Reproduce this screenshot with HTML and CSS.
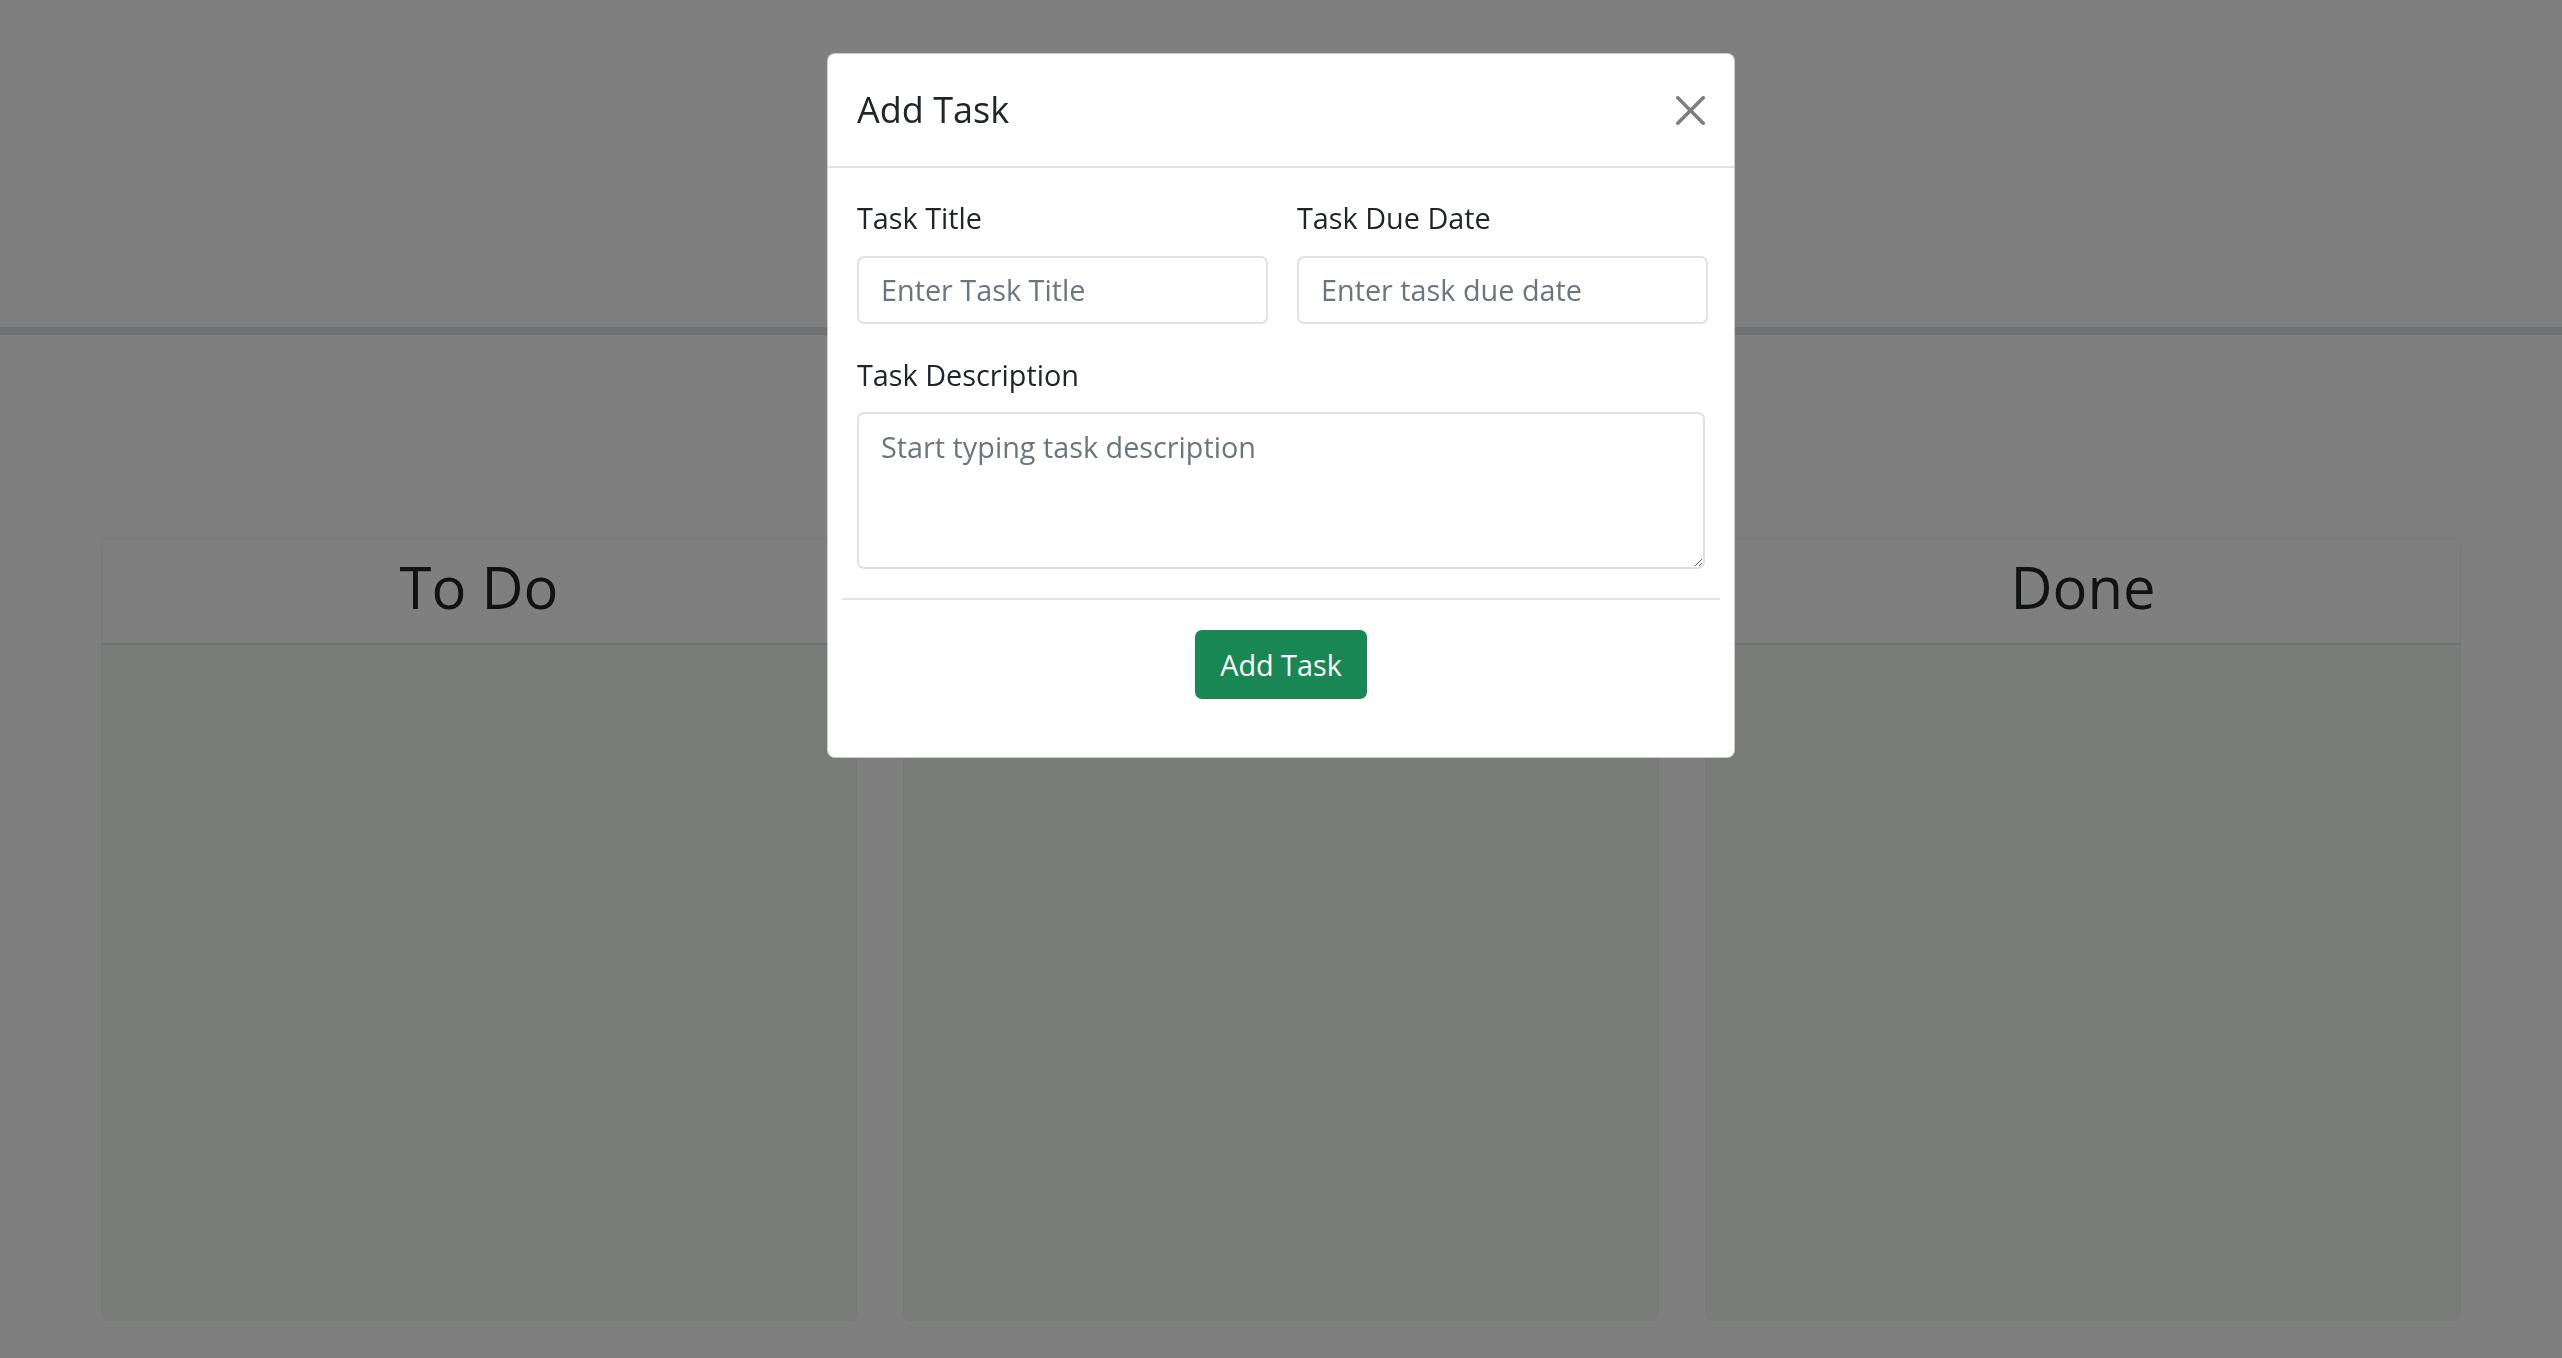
FILE: index.html
```html
<!DOCTYPE html>
<html lang="en">
<head>
<meta charset="utf-8">
<title>Task Board</title>
<link rel="stylesheet" href="styles.css">
</head>
<body>
<header class="page-header"></header>
<main class="board">
  <section class="lane">
    <div class="lane-head"><h2 class="lane-title">To Do</h2></div>
    <div class="lane-body"></div>
  </section>
  <section class="lane">
    <div class="lane-head"><h2 class="lane-title"></h2></div>
    <div class="lane-body"></div>
  </section>
  <section class="lane">
    <div class="lane-head"><h2 class="lane-title">Done</h2></div>
    <div class="lane-body"></div>
  </section>
</main>

<div class="backdrop"></div>
<div class="modal">
  <div class="modal-dialog">
    <div class="modal-header">
      <h5 class="modal-title">Add Task</h5>
      <button class="btn-close" type="button" aria-label="Close">
        <svg viewBox="0 0 16 16" width="29" height="29"><path d="M.293.293a1 1 0 0 1 1.414 0L8 6.586 14.293.293a1 1 0 1 1 1.414 1.414L9.414 8l6.293 6.293a1 1 0 0 1-1.414 1.414L8 9.414l-6.293 6.293a1 1 0 0 1-1.414-1.414L6.586 8 .293 1.707a1 1 0 0 1 0-1.414z"/></svg>
      </button>
    </div>
    <div class="modal-body">
      <div class="field-row">
        <div class="field">
          <label class="field-label" for="title">Task Title</label>
          <input class="field-input" id="title" type="text" placeholder="Enter Task Title">
        </div>
        <div class="field">
          <label class="field-label" for="due">Task Due Date</label>
          <input class="field-input" id="due" type="text" placeholder="Enter task due date">
        </div>
      </div>
      <div class="field">
        <label class="field-label" for="desc">Task Description</label>
        <textarea class="field-input field-area" id="desc" placeholder="Start typing task description"></textarea>
      </div>
    </div>
    <hr class="divider">
    <div class="modal-footer">
      <button class="btn-add" type="button">Add Task</button>
    </div>
  </div>
</div>
</body>
</html>
```

FILE: styles.css
```css
* { box-sizing: border-box; }

html, body {
  margin: 0;
  padding: 0;
}

body {
  background: #fff;
  font-family: "Open Sans", "Noto Sans", sans-serif;
  color: #212529;
  width: 2562px;
  height: 1358px;
  overflow: hidden;
}

.page-header {
  height: 335px;
  background: #fff;
  border-bottom: 8px solid #dee2e6;
}

.board {
  width: 2360px;
  margin: 203px auto 0;
  display: grid;
  grid-template-columns: repeat(3, 1fr);
  gap: 46px;
}

.lane {
  height: 783px;
  display: flex;
  flex-direction: column;
  border: 1px solid rgba(0, 0, 0, 0.05);
  border-radius: 7px;
  overflow: hidden;
}

.lane-head {
  padding: 13px 0 22px;
  border-bottom: 2px solid #dee2e6;
  text-align: center;
  background: #fff;
}

.lane-title {
  margin: 0;
  font-size: 58px;
  line-height: 69px;
  font-weight: 400;
  min-height: 69px;
}

.lane-body {
  flex: 1;
  background: #f4f8f5;
}

.backdrop {
  position: fixed;
  inset: 0;
  background: rgba(0, 0, 0, 0.5);
}

.modal {
  position: fixed;
  inset: 0;
}

.modal-dialog {
  width: 908px;
  margin: 53px auto 0;
  background: #fff;
  border: 1px solid rgba(0, 0, 0, 0.2);
  border-radius: 8px;
}

.modal-header {
  display: flex;
  align-items: center;
  justify-content: space-between;
  padding: 29px;
  border-bottom: 2px solid #dee2e6;
}

.modal-title {
  margin: 0;
  font-size: 36px;
  line-height: 54px;
  font-weight: 400;
}

.btn-close {
  display: flex;
  padding: 0;
  margin: 0;
  border: 0;
  background: transparent;
  cursor: pointer;
}

.btn-close svg {
  fill: #000;
  opacity: 0.5;
}

.modal-body {
  padding: 28px 29px 29px;
}

.field-row {
  display: grid;
  grid-template-columns: 1fr 1fr;
  gap: 29px;
  margin-bottom: 29px;
}

.field {
  display: flex;
  flex-direction: column;
}

.field-label {
  font-size: 28.8px;
  line-height: 43px;
  margin-bottom: 16.5px;
}

.field-input {
  height: 68.4px;
  padding: 0 22px;
  border: 2px solid #dee2e6;
  border-radius: 7px;
  font-family: inherit;
  font-size: 28.8px;
  color: #212529;
  background: #fff;
  outline: none;
}

.field-input::placeholder {
  color: #6c757d;
  opacity: 1;
}

.field-area {
  height: 157px;
  padding: 10.8px 22px;
  line-height: 43.2px;
  resize: vertical;
}

.divider {
  margin: 0 14px;
  border: 0;
  border-top: 2px solid #e1e4e7;
}

.modal-footer {
  display: flex;
  justify-content: center;
  padding: 30px 0 58px;
}

.btn-add {
  height: 69px;
  padding: 0 25px;
  border: 0;
  border-radius: 7px;
  background: #198754;
  color: #fff;
  font-family: inherit;
  font-size: 28.8px;
  line-height: 43.2px;
  cursor: pointer;
}
```
